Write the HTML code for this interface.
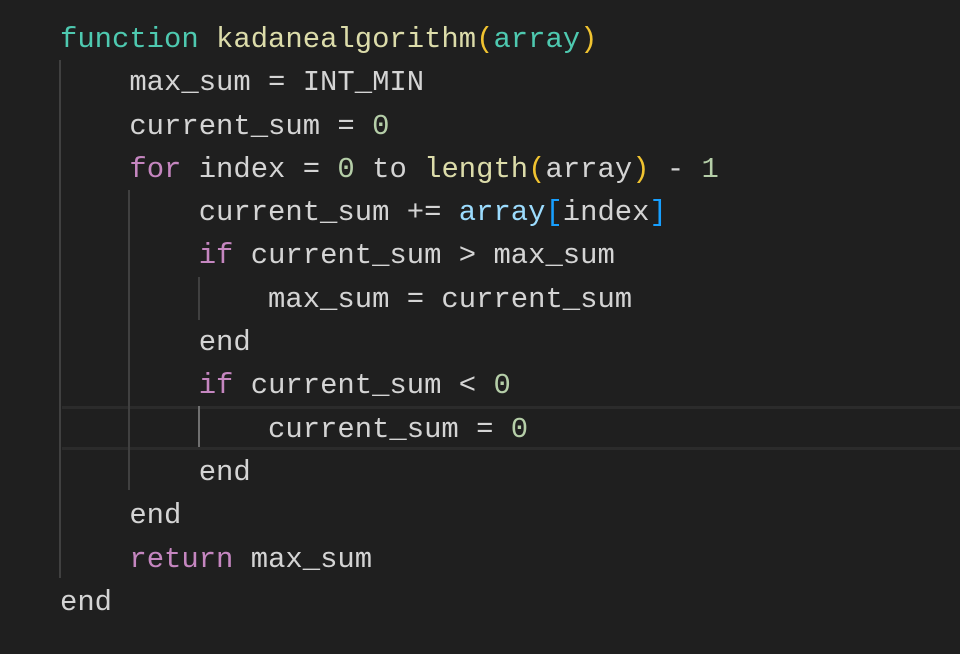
<!DOCTYPE html>
<html><head><meta charset="utf-8"><style>
html,body{margin:0;padding:0;background:#1f1f1f;width:960px;height:654px;overflow:hidden}
.code{position:absolute;left:60px;top:18px;font-family:"Liberation Mono",monospace;font-size:28.9px;line-height:43.3px;color:#d4d4d4;white-space:pre}
.k{color:#4ec9b0}.f{color:#dcdcaa}.p{color:#f0c330}.v{color:#9cdcfe}.c{color:#c586c0}.n{color:#b5cea8}.b{color:#179fff}
.g{position:absolute;width:2px;background:#404040}
.hl{position:absolute;left:62px;top:406px;width:898px;height:38px;border-top:3px solid #2b2b2b;border-bottom:3px solid #2b2b2b}
</style></head><body>
<div class="hl"></div>
<div class="g" style="left:59px;top:60px;height:518px"></div>
<div class="g" style="left:128px;top:190px;height:300px"></div>
<div class="g" style="left:198px;top:277px;height:43px"></div>
<div class="g" style="left:198px;top:406px;height:41px;background:#707070"></div>
<div class="code"><span class="k">function</span> <span class="f">kadanealgorithm</span><span class="p">(</span><span class="k">array</span><span class="p">)</span>
    max_sum = INT_MIN
    current_sum = <span class="n">0</span>
    <span class="c">for</span> index = <span class="n">0</span> to <span class="f">length</span><span class="p">(</span>array<span class="p">)</span> - <span class="n">1</span>
        current_sum += <span class="v">array</span><span class="b">[</span>index<span class="b">]</span>
        <span class="c">if</span> current_sum &gt; max_sum
            max_sum = current_sum
        end
        <span class="c">if</span> current_sum &lt; <span class="n">0</span>
            current_sum = <span class="n">0</span>
        end
    end
    <span class="c">return</span> max_sum
end</div>
</body></html>
